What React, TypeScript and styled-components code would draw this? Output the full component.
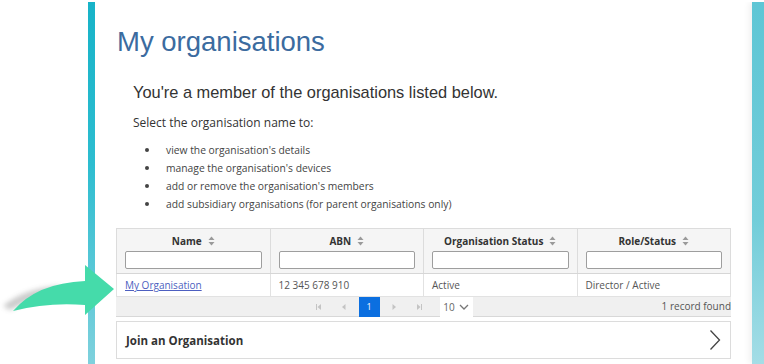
import styled, { createGlobalStyle } from 'styled-components';

const GlobalStyle = createGlobalStyle`
  html, body {
    margin: 0;
    padding: 0;
    background: #ffffff;
  }
`;

const columns = ['Name', 'ABN', 'Organisation Status', 'Role/Status'];

const bullets = [
  "view the organisation's details",
  "manage the organisation's devices",
  "add or remove the organisation's members",
  'add subsidiary organisations (for parent organisations only)',
];

const SortIcon = () => (
  <svg width="7" height="10" viewBox="0 0 7 10">
    <path d="M3.5 0.5 L6.5 4 H0.5 Z" fill="#9a9a9a" />
    <path d="M3.5 9.5 L6.5 6 H0.5 Z" fill="#9a9a9a" />
  </svg>
);

const PagerIcon = ({ kind }: { kind: 'first' | 'prev' | 'next' | 'last' }) => (
  <svg width="8" height="8" viewBox="0 0 8 8">
    {kind === 'first' && (
      <>
        <rect x="1" y="1" width="1" height="6" fill="#c4c4c4" />
        <path d="M6 1 L2.5 4 L6 7 Z" fill="#c4c4c4" />
      </>
    )}
    {kind === 'prev' && <path d="M5.5 1 L2 4 L5.5 7 Z" fill="#c4c4c4" />}
    {kind === 'next' && <path d="M2.5 1 L6 4 L2.5 7 Z" fill="#c4c4c4" />}
    {kind === 'last' && (
      <>
        <rect x="6" y="1" width="1" height="6" fill="#c4c4c4" />
        <path d="M2 1 L5.5 4 L2 7 Z" fill="#c4c4c4" />
      </>
    )}
  </svg>
);

const Arrow = () => (
  <ArrowSvg width="120" height="72" viewBox="0 0 120 72">
    <defs>
      <filter id="arrowShadow" x="-30%" y="-30%" width="160%" height="160%">
        <feGaussianBlur stdDeviation="2.5" />
      </filter>
    </defs>
    {/* soft grey shadow behind the tail */}
    <path
      d="M3 56 Q25 38 60 36 L60 44 Q35 46 10 60 Z"
      fill="#8c8c8c"
      opacity="0.45"
      filter="url(#arrowShadow)"
    />
    <path
      d="M13 61 Q37 33 85 31 L85 15 L114 39 L85 65 L85 55 Q48 52 13 61 Z"
      fill="#45dbaa"
    />
  </ArrowSvg>
);

export default function App() {
  return (
    <>
      <GlobalStyle />
      <Page>
        <Gutter />
        <LeftStrip />
        <Main>
          <Title>My organisations</Title>
          <Intro>
            <Lead>You're a member of the organisations listed below.</Lead>
            <Small>Select the organisation name to:</Small>
            <List>
              {bullets.map((b) => (
                <Item key={b}>{b}</Item>
              ))}
            </List>
          </Intro>

          <Table>
            <thead>
              <tr>
                {columns.map((c) => (
                  <HeadCell key={c}>
                    <HeadLabel>
                      {c} <SortIcon />
                    </HeadLabel>
                    <FilterInput />
                  </HeadCell>
                ))}
              </tr>
            </thead>
            <tbody>
              <tr>
                <Cell>
                  <OrgLink href="#">My Organisation</OrgLink>
                </Cell>
                <Cell>12 345 678 910</Cell>
                <Cell>Active</Cell>
                <Cell>Director / Active</Cell>
              </tr>
            </tbody>
          </Table>

          <Pager>
            <PagerControls>
              <PagerButton><PagerIcon kind="first" /></PagerButton>
              <PagerButton><PagerIcon kind="prev" /></PagerButton>
              <PageNumber>1</PageNumber>
              <PagerButton><PagerIcon kind="next" /></PagerButton>
              <PagerButton><PagerIcon kind="last" /></PagerButton>
              <PageSize>
                10
                <svg width="10" height="6" viewBox="0 0 10 6">
                  <path d="M1 1 L5 5 L9 1" stroke="#777" strokeWidth="1.3" fill="none" />
                </svg>
              </PageSize>
            </PagerControls>
            <RecordCount>1 record found</RecordCount>
          </Pager>

          <JoinBox>
            <JoinLabel>Join an Organisation</JoinLabel>
            <svg width="12" height="22" viewBox="0 0 12 22">
              <path d="M1.5 1.5 L10.5 11 L1.5 20.5" stroke="#444" strokeWidth="1.3" fill="none" />
            </svg>
          </JoinBox>
        </Main>
        <RightStrip />
        <Arrow />
      </Page>
    </>
  );
}

const Page = styled.div`
  position: relative;
  display: flex;
  width: 764px;
  height: 362px;
  margin-top: 2px;
  overflow: hidden;
  font-family: 'Open Sans', 'Noto Sans', sans-serif;
`;

const Gutter = styled.div`
  width: 88px;
  flex-shrink: 0;
`;

const LeftStrip = styled.div`
  width: 7px;
  flex-shrink: 0;
  background: linear-gradient(180deg, #17b3c8 0%, #2dbdd0 45%, #7fd1dd 100%);
`;

const RightStrip = styled.div`
  width: 12px;
  flex-shrink: 0;
  background: linear-gradient(180deg, #5ec6d5 0%, #72cdd9 60%, #a4dde6 100%);
  box-shadow: -3px 0 6px rgba(0, 0, 0, 0.06);
`;

const Main = styled.main`
  flex: 1;
  padding: 0 21px;
  display: flex;
  flex-direction: column;
`;

const Title = styled.h1`
  margin: 25px 0 0 1px;
  font-family: 'Liberation Sans', Arial, sans-serif;
  font-weight: 400;
  font-size: 27.5px;
  line-height: 30px;
  color: #3b6b9f;
`;

const Intro = styled.section`
  padding-left: 17px;
  margin-top: 25px;
`;

const Lead = styled.p`
  margin: 0;
  font-family: 'Liberation Sans', Arial, sans-serif;
  font-size: 16.4px;
  line-height: 20px;
  color: #333;
`;

const Small = styled.p`
  margin: 13px 0 0;
  font-size: 12px;
  line-height: 16px;
  color: #333;
`;

const List = styled.ul`
  margin: 10px 0 0;
  padding-left: 12px;
  list-style: none;
  font-size: 10.3px;
  line-height: 18px;
  color: #444;
`;

const Item = styled.li`
  display: flex;
  align-items: center;

  &::before {
    content: '';
    width: 4px;
    height: 4px;
    border-radius: 50%;
    background: #444;
    margin-right: 17px;
    flex-shrink: 0;
  }
`;

const Table = styled.table`
  margin-top: 15px;
  width: 615px;
  border-collapse: collapse;
  table-layout: fixed;
  font-size: 10px;
  color: #444;
`;

const HeadCell = styled.th`
  background: #f5f5f5;
  border: 1px solid #dcdcdc;
  border-bottom-color: #d6d6d6;
  padding: 5px 8px 4px;
  height: 35px;
  font-weight: 700;
  color: #333;
  vertical-align: top;
`;

const HeadLabel = styled.div`
  display: flex;
  justify-content: center;
  align-items: center;
  gap: 6px;
  height: 14px;
`;

const FilterInput = styled.input`
  display: block;
  box-sizing: border-box;
  width: 100%;
  height: 18px;
  margin-top: 3px;
  border: 1px solid #9e9e9e;
  border-radius: 2px;
  background: #fff;
`;

const Cell = styled.td`
  height: 22px;
  padding: 0 8px;
  border-left: 1px solid #e2e2e2;
  border-right: 1px solid #e2e2e2;
  background: #fff;
  color: #555;
`;

const OrgLink = styled.a`
  color: #4d5fc0;
  text-decoration: underline;
`;

const Pager = styled.div`
  position: relative;
  box-sizing: border-box;
  width: 615px;
  height: 21px;
  background: #f0f0f0;
  border-top: 1px solid #e2e2e2;
  border-bottom: 1px solid #d8d8d8;
  display: flex;
  justify-content: center;
`;

const PagerControls = styled.div`
  display: flex;
  align-items: center;
  margin-right: 68px;
`;

const PagerButton = styled.span`
  width: 25px;
  display: flex;
  justify-content: center;
  align-items: center;
`;

const PageNumber = styled.span`
  width: 21px;
  height: 20px;
  margin: 0 2px;
  background: #0b6fe0;
  color: #fff;
  font-size: 9px;
  display: flex;
  align-items: center;
  justify-content: center;
`;

const PageSize = styled.span`
  margin-left: 8px;
  width: 33px;
  height: 20px;
  background: #fff;
  font-size: 10px;
  color: #666;
  display: flex;
  align-items: center;
  justify-content: center;
  gap: 4px;
`;

const RecordCount = styled.span`
  position: absolute;
  right: 0;
  top: 2px;
  font-size: 10px;
  color: #555;
`;

const JoinBox = styled.div`
  box-sizing: border-box;
  width: 615px;
  height: 38px;
  margin-top: 4px;
  border: 1px solid #dcdcdc;
  padding: 0 9px;
  display: flex;
  align-items: center;
  justify-content: space-between;
`;

const JoinLabel = styled.span`
  font-size: 11.5px;
  font-weight: 700;
  color: #333;
`;

const ArrowSvg = styled.svg`
  position: absolute;
  left: 0;
  top: 248px;
`;
